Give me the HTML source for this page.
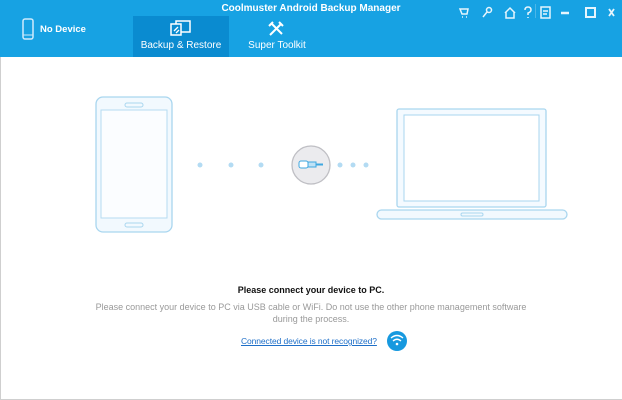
<!DOCTYPE html>
<html><head><style>
*{margin:0;padding:0;box-sizing:border-box}
body{width:622px;height:400px;overflow:hidden;background:#fff;font-family:"Liberation Sans",Arial,sans-serif;position:relative}
.hdr{position:absolute;left:0;top:0;width:622px;height:57px;background:#17a2e3}
.title{position:absolute;top:3px;left:0;width:622px;text-align:center;color:#fff;font-weight:bold;font-size:10px}
.tab{position:absolute;top:16px;height:41px;width:96px;color:#fff;font-size:10px;text-align:center}
.tab span{position:absolute;bottom:6px;left:0;width:100%}
.frame{position:absolute;left:0;top:57px;width:622px;height:343px;border-left:1px solid #cfcfcf;border-bottom:1px solid #cfcfcf}
.t{position:absolute;left:0;width:622px;text-align:center}
</style></head><body>
<div class="hdr">
<div class="title">Coolmuster Android Backup Manager</div>
<svg style="position:absolute;left:22px;top:18px" width="12" height="22"><rect x="1" y="1" width="10" height="20" rx="2" fill="none" stroke="#cdeafc" stroke-width="1.5"/><line x1="1" y1="17" x2="11" y2="17" stroke="#cdeafc"/></svg>
<div style="position:absolute;left:40px;top:24px;color:#fff;font-weight:bold;font-size:9.5px">No Device</div>
<div class="tab" style="left:133px;background:#0a8bd0">
<svg style="position:absolute;left:37px;top:4px" width="22" height="18"><rect x="6" y="1" width="14" height="11" fill="none" stroke="#fff" stroke-width="1.5"/><rect x="1" y="4" width="10" height="11" fill="#0a8bd0" stroke="#fff" stroke-width="1.5"/><path d="M4 11 L8 7 M6 13 L9 10" stroke="#fff" stroke-width="1.3"/></svg>
<span>Backup &amp; Restore</span></div>
<div class="tab" style="left:229px">
<svg style="position:absolute;left:38px;top:4px" width="18" height="18"><path d="M3 15 L14 4 M4 3 L15 14 M12 2 L16 6 M2 6 L6 2" stroke="#fff" stroke-width="2"/></svg>
<span>Super Toolkit</span></div>
<svg style="position:absolute;left:458px;top:6px" width="160" height="14" fill="none" stroke="#e6f5fd" stroke-width="1.5">
<path d="M2 3 H10 L9 8 H4 Z M4 11 h1 M8 11 h1"/>
<circle cx="31" cy="4" r="2.5"/><path d="M29 6 L25 11"/>
<path d="M47 7 L52 2 L57 7 M48 6 V12 H56 V6"/>
<path d="M67 4 Q67 1 70 1 Q73 1 73 4 Q73 6 70 7 V9 M70 11 V12"/>
<rect x="83" y="1" width="9" height="11"/><path d="M85 5 H90 M85 8 H89"/>
<path d="M103 7 H111" stroke-width="2.5"/>
<rect x="128" y="2" width="9" height="9" stroke-width="2"/>
<path d="M151 3 L156 10 M156 3 L151 10" stroke-width="1.8"/>
</svg>
<div style="position:absolute;left:535px;top:4px;width:1px;height:14px;background:#4cb6e8"></div>
</div>
<div class="frame"></div>
<svg style="position:absolute;left:0;top:0" width="622" height="400">
<rect x="96" y="97" width="76" height="135" rx="7" fill="#f2f9fe" stroke="#a9d6ef" stroke-width="1.3"/>
<rect x="101" y="110" width="66" height="108" fill="#fbfdff" stroke="#b5dcf1"/>
<rect x="125" y="103" width="18" height="4" rx="2" fill="none" stroke="#a9d6ef"/>
<rect x="125" y="223" width="18" height="4" rx="2" fill="none" stroke="#a9d6ef"/>
<g fill="#b3dbf3"><circle cx="200" cy="165" r="2.5"/><circle cx="231" cy="165" r="2.5"/><circle cx="261" cy="165" r="2.5"/><circle cx="340" cy="165" r="2.5"/><circle cx="353" cy="165" r="2.5"/><circle cx="366" cy="165" r="2.5"/></g>
<circle cx="311" cy="165" r="19" fill="#ebebee" stroke="#bfbfc4" stroke-width="1.3"/>
<rect x="299" y="161" width="9" height="7" rx="2" fill="#fff" stroke="#3ea7e0"/>
<rect x="308" y="162" width="8" height="5" fill="#bfe2f6" stroke="#3ea7e0"/>
<path d="M316 164.5 H323" stroke="#3ea7e0" stroke-width="2"/>
<rect x="397" y="109" width="149" height="98" rx="2" fill="#f4faff" stroke="#a9d6ef" stroke-width="1.3"/>
<rect x="404" y="115" width="135" height="86" fill="#fff" stroke="#a9d6ef"/>
<rect x="377" y="210" width="190" height="9" rx="4.5" fill="#f2f9fe" stroke="#a9d6ef" stroke-width="1.3"/>
<rect x="461" y="213" width="22" height="3" rx="1.5" fill="none" stroke="#a9d6ef"/>
<circle cx="397" cy="341" r="10" fill="#1799df"/>
<g fill="none" stroke="#fff" stroke-width="1.4"><path d="M391 338 Q397 333 403 338"/><path d="M393 341 Q397 337.5 401 341"/></g><circle cx="397" cy="344" r="1.3" fill="#fff"/>
</svg>
<div class="t" style="top:285px;font-size:9px;font-weight:bold;color:#111">Please connect your device to PC.</div>
<div class="t" style="top:301px;font-size:9px;color:#999;line-height:12px">Please connect your device to PC via USB cable or WiFi. Do not use the other phone management software<br>during the process.</div>
<div style="position:absolute;left:241px;top:336px;font-size:8.5px;letter-spacing:-0.1px;color:#1e6fc8;text-decoration:underline">Connected device is not recognized?</div>
</body></html>
